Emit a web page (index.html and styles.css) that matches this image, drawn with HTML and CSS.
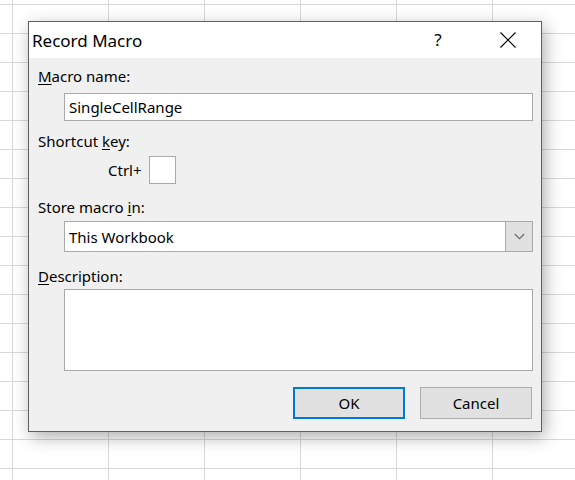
FILE: index.html
```html
<!DOCTYPE html>
<html lang="en">
<head>
<meta charset="utf-8">
<title>Record Macro</title>
<link rel="stylesheet" href="styles.css">
</head>
<body>
<div class="sheet">
  <div class="dialog">
    <div class="titlebar">
      <span class="title">Record Macro</span>
      <span class="help">?</span>
      <span class="close">
        <svg width="16" height="16" viewBox="0 0 16 16"><path d="M0.5 0.5 L15.5 15.5 M15.5 0.5 L0.5 15.5" stroke="#000" stroke-width="1.1" fill="none"/></svg>
      </span>
    </div>
    <div class="body">
      <div class="label l1"><u>M</u>acro name:</div>
      <div class="field f1">SingleCellRange</div>
      <div class="label l2">Shortcut <u>k</u>ey:</div>
      <div class="ctrl-row">
        <span class="ctrl">Ctrl+</span>
        <span class="keybox"></span>
      </div>
      <div class="label l3">Store macro <u>i</u>n:</div>
      <div class="combo">
        <span class="combo-text">This Workbook</span>
        <span class="combo-btn">
          <svg width="11" height="7" viewBox="0 0 11 7"><path d="M0.8 1 L5.5 5.7 L10.2 1" stroke="#666" stroke-width="1.1" fill="none"/></svg>
        </span>
      </div>
      <div class="label l4"><u>D</u>escription:</div>
      <div class="textarea"></div>
      <div class="buttons">
        <button class="btn ok">OK</button>
        <button class="btn cancel">Cancel</button>
      </div>
    </div>
  </div>
</div>
</body>
</html>
```

FILE: styles.css
```css
html, body {
  margin: 0;
  padding: 0;
}
body {
  width: 575px;
  height: 480px;
  overflow: hidden;
  background-color: #fff;
  background-image:
    linear-gradient(to right, #d9d9d9 1px, transparent 1px),
    linear-gradient(to bottom, #d9d9d9 1px, transparent 1px);
  background-size: 96px 29px;
  background-position: 12px 4px;
  font-family: "Noto Sans", "Open Sans", sans-serif;
  color: #000;
}
.sheet {
  padding: 21px 0 0 28px;
}
.dialog {
  width: 514px;
  height: 411px;
  box-sizing: border-box;
  border: 1px solid #5f5f5f;
  background: #f0f0f0;
  box-shadow: 3px 5px 16px rgba(0, 0, 0, 0.32);
  display: flex;
  flex-direction: column;
}
.titlebar {
  height: 36px;
  background: #fff;
  display: flex;
  align-items: center;
  padding-left: 3px;
}
.title {
  font-size: 17px;
  flex: 1;
}
.help {
  font-size: 17px;
  width: 16px;
  text-align: center;
  margin-right: 54px;
  position: relative;
  top: -1px;
}
.close {
  width: 16px;
  height: 16px;
  margin-right: 25px;
  display: flex;
}
.body {
  flex: 1;
  padding: 8px 8px 0 9px;
  display: flex;
  flex-direction: column;
}
.label {
  font-size: 15px;
  line-height: 20px;
  height: 20px;
}
.label u {
  text-decoration-thickness: 1px;
  text-underline-offset: 2px;
}
.field, .combo, .textarea {
  margin-left: 26px;
  background: #fff;
  border: 1px solid #a9a9a9;
  box-sizing: border-box;
}
.field {
  height: 28px;
  margin-top: 7px;
  font-size: 15px;
  line-height: 26px;
  padding-left: 4px;
}
.l2 { margin-top: 10px; }
.ctrl-row {
  margin-top: 5px;
  margin-left: 70px;
  display: flex;
  align-items: center;
  height: 28px;
}
.ctrl {
  font-size: 15px;
  margin-right: 7px;
}
.keybox {
  width: 27px;
  height: 28px;
  box-sizing: border-box;
  background: #fff;
  border: 1px solid #a9a9a9;
}
.l3 { margin-top: 13px; }
.combo {
  margin-top: 4px;
  height: 31px;
  display: flex;
  align-items: center;
  font-size: 15px;
}
.combo-text {
  flex: 1;
  padding-left: 4px;
}
.combo-btn {
  width: 27px;
  height: 29px;
  box-sizing: border-box;
  background: #e1e1e1;
  border-left: 1px solid #adadad;
  display: flex;
  align-items: center;
  justify-content: center;
}
.l4 { margin-top: 14px; }
.textarea {
  margin-top: 3px;
  height: 82px;
}
.buttons {
  margin-top: 16px;
  margin-right: 1px;
  display: flex;
  justify-content: flex-end;
  gap: 15px;
}
.btn {
  width: 112px;
  height: 32px;
  box-sizing: border-box;
  background: #e1e1e1;
  border: 1px solid #adadad;
  font-family: "Noto Sans", "Open Sans", sans-serif;
  font-size: 15px;
  color: #000;
  padding: 0;
}
.btn.ok {
  border: 2px solid #0078d7;
}
```
